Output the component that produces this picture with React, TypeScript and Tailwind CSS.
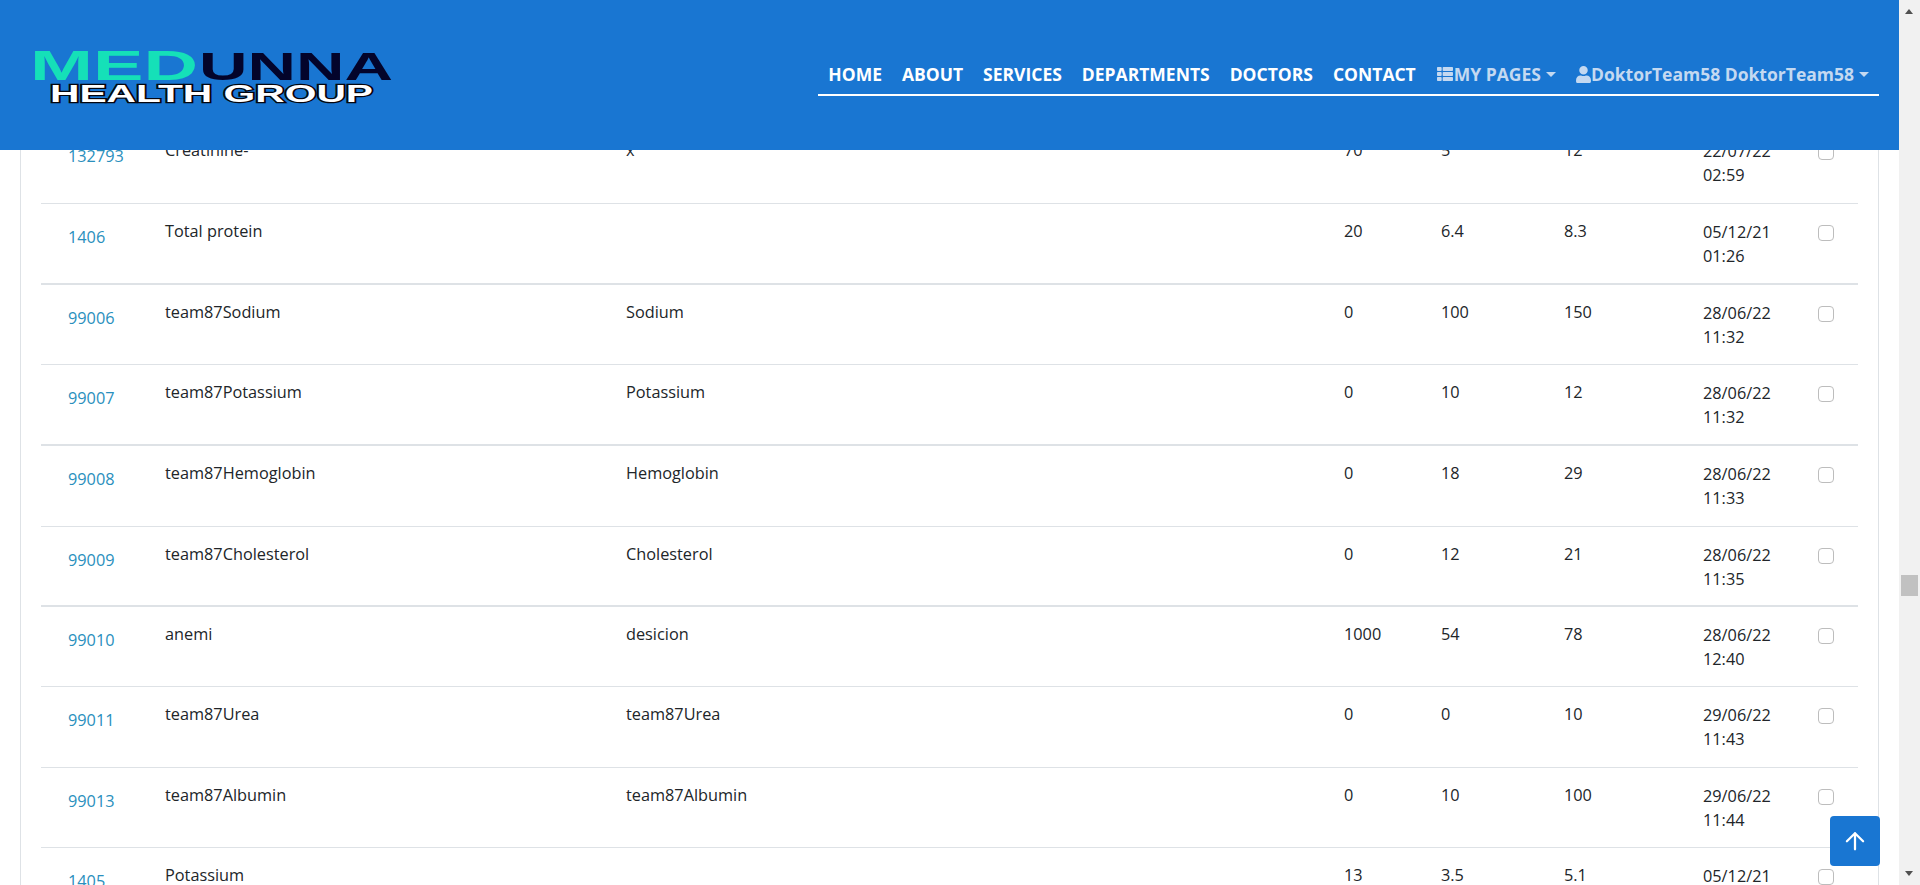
import React from 'react';
import { FaThList, FaUser } from 'react-icons/fa';

type Row = {
  id: string;
  name: string;
  desc: string;
  price: string;
  min: string;
  max: string;
  date: string;
  time: string;
  thick?: boolean;
  tall?: boolean;
};

const rows: Row[] = [
  { id: '132793', name: 'Creatinine-', desc: 'x', price: '70', min: '5', max: '12', date: '22/07/22', time: '02:59' },
  { id: '1406', name: 'Total protein', desc: '', price: '20', min: '6.4', max: '8.3', date: '05/12/21', time: '01:26', thick: true, tall: true },
  { id: '99006', name: 'team87Sodium', desc: 'Sodium', price: '0', min: '100', max: '150', date: '28/06/22', time: '11:32' },
  { id: '99007', name: 'team87Potassium', desc: 'Potassium', price: '0', min: '10', max: '12', date: '28/06/22', time: '11:32', thick: true, tall: true },
  { id: '99008', name: 'team87Hemoglobin', desc: 'Hemoglobin', price: '0', min: '18', max: '29', date: '28/06/22', time: '11:33', tall: true },
  { id: '99009', name: 'team87Cholesterol', desc: 'Cholesterol', price: '0', min: '12', max: '21', date: '28/06/22', time: '11:35', thick: true },
  { id: '99010', name: 'anemi', desc: 'desicion', price: '1000', min: '54', max: '78', date: '28/06/22', time: '12:40' },
  { id: '99011', name: 'team87Urea', desc: 'team87Urea', price: '0', min: '0', max: '10', date: '29/06/22', time: '11:43', tall: true },
  { id: '99013', name: 'team87Albumin', desc: 'team87Albumin', price: '0', min: '10', max: '100', date: '29/06/22', time: '11:44' },
  { id: '1405', name: 'Potassium', desc: '', price: '13', min: '3.5', max: '5.1', date: '05/12/21', time: '01:26' },
];

const navLinks = ['HOME', 'ABOUT', 'SERVICES', 'DEPARTMENTS', 'DOCTORS', 'CONTACT'];

const Caret = () => (
  <span className="ml-[5px] inline-block h-0 w-0 border-x-[5px] border-t-[5px] border-x-transparent border-t-[#c4d9f1]" />
);

// the logo is a picture in the original, so it stays an svg
const Logo = () => (
  <svg width="370" height="62" viewBox="0 0 370 62" className="block">
    <text x="-3" y="30" textLength="168" lengthAdjust="spacingAndGlyphs" fontFamily="Liberation Sans" fontWeight="700" fontSize="42" fill="#15e0b8">MED</text>
    <text x="166" y="30" textLength="194" lengthAdjust="spacingAndGlyphs" fontFamily="Liberation Sans" fontWeight="700" fontSize="38" fill="#03042b">UNNA</text>
    <text x="17" y="52" textLength="323" lengthAdjust="spacingAndGlyphs" fontFamily="Liberation Sans" fontWeight="700" fontSize="24" fill="#ffffff" stroke="#05060f" strokeWidth="2.4" paintOrder="stroke">HEALTH GROUP</text>
  </svg>
);

export default function App() {
  return (
    <div className="flex h-[885px] w-full overflow-hidden bg-white font-['Open_Sans',sans-serif] text-[16.3px] leading-[24.3px] text-[#212529]">
      <div className="relative flex min-w-0 flex-1 flex-col">
        <header className="z-10 flex h-[150px] shrink-0 bg-[#1976d2]">
          <div className="ml-[33px] mt-[50px]">
            <Logo />
          </div>
          <nav className="ml-auto mr-[20px] mt-[58px] flex h-[38px] items-start border-b-2 border-white text-[17.5px] font-bold leading-[24px] text-white">
            {navLinks.map(label => (
              <a key={label} className="px-[10px] py-[4px]">{label}</a>
            ))}
            <a className="flex items-center whitespace-nowrap px-[10px] py-[4px] text-[#c4d9f1]">
              <FaThList className="h-[16px] w-[18px]" />
              MY PAGES<Caret />
            </a>
            <a className="flex items-center whitespace-nowrap px-[10px] py-[4px] text-[#c4d9f1]">
              <FaUser className="h-[17px] w-[15px]" />
              DoktorTeam58 DoktorTeam58<Caret />
            </a>
          </nav>
        </header>

        <main className="min-h-0 flex-1 overflow-hidden">
          <div className="ml-[20px] mr-[20px] -mt-[27px] border-x border-[#dee2e6] px-[20px]">
            <table className="w-full table-fixed border-collapse">
              <colgroup>
                <col className="w-[112px]" />
                <col className="w-[461px]" />
                <col className="w-[718px]" />
                <col className="w-[97px]" />
                <col className="w-[123px]" />
                <col className="w-[139px]" />
                <col className="w-[123px]" />
                <col />
              </colgroup>
              <tbody>
                {rows.map(row => (
                  <tr
                    key={row.id}
                    className={`${row.tall ? 'h-[81px]' : 'h-[80px]'} ${row.thick ? 'border-b-2' : 'border-b'} border-[#dee2e6]`}
                  >
                    <td className="pl-[27px] pt-[21px] align-top text-[#2a8fbd]">{row.id}</td>
                    <td className="px-[12px] pt-[15px] align-top">{row.name}</td>
                    <td className="px-[12px] pt-[15px] align-top">{row.desc}</td>
                    <td className="px-[12px] pt-[15px] align-top">{row.price}</td>
                    <td className="px-[12px] pt-[15px] align-top">{row.min}</td>
                    <td className="px-[12px] pt-[15px] align-top">{row.max}</td>
                    <td className="px-[12px] pt-[16px] align-top whitespace-nowrap">{row.date}<br />{row.time}</td>
                    <td className="pt-[21px] align-top">
                      <span className="ml-[4px] block h-[16px] w-[16px] rounded-[4px] border border-[#bdbdbd] bg-white" />
                    </td>
                  </tr>
                ))}
              </tbody>
            </table>
          </div>
        </main>

        <button className="absolute left-[1830px] top-[816px] flex h-[50px] w-[50px] items-center justify-center rounded-[4px] bg-[#1976d2] text-white">
          <svg width="24" height="24" viewBox="0 0 16 16" fill="none" stroke="currentColor" strokeWidth="1.5" strokeLinecap="round" strokeLinejoin="round">
            <path d="M8 13.5V2.8M2.6 8.2 8 2.8l5.4 5.4" />
          </svg>
        </button>
      </div>

      {/* page scrollbar */}
      <div className="relative w-[21px] shrink-0 bg-[#f1f1f1]">
        <span className="absolute left-[6px] top-[9px] h-0 w-0 border-x-[4px] border-b-[5px] border-x-transparent border-b-[#505050]" />
        <span className="absolute left-[2px] top-[575px] h-[21px] w-[17px] bg-[#c1c1c1]" />
        <span className="absolute bottom-[9px] left-[6px] h-0 w-0 border-x-[4px] border-t-[5px] border-x-transparent border-t-[#505050]" />
      </div>
    </div>
  );
}
